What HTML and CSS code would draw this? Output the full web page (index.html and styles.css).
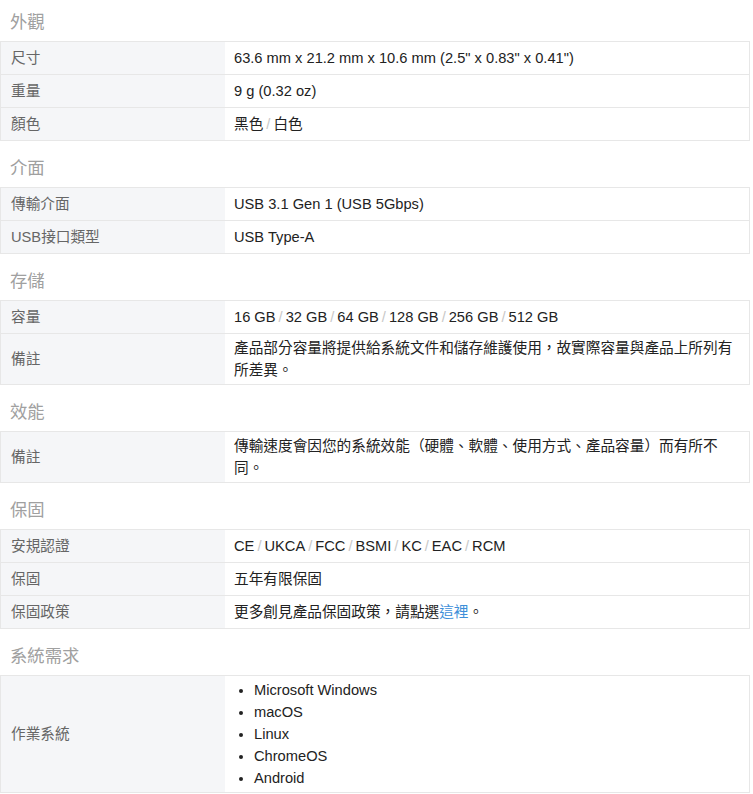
FILE: index.html
```html
<!DOCTYPE html>
<html lang="zh-Hant">
<head>
  <meta charset="UTF-8" />
  <meta name="viewport" content="width=device-width, initial-scale=1.0" />
  <title>產品規格</title>
  <link rel="stylesheet" href="styles.css">
</head>
<body>

  <div class="specs">

    <!-- 外觀 -->
    <h3 class="spec-title">外觀</h3>
    <div class="spec-table">
      <div class="spec-row">
        <div class="spec-label">尺寸</div>
        <div class="spec-value"><p>63.6 mm x 21.2 mm x 10.6 mm (2.5" x 0.83" x 0.41")</p></div>
      </div>
      <div class="spec-row">
        <div class="spec-label">重量</div>
        <div class="spec-value"><p>9 g (0.32 oz)</p></div>
      </div>
      <div class="spec-row">
        <div class="spec-label">顏色</div>
        <div class="spec-value"><p>黑色<span class="sep">/</span>白色</p></div>
      </div>
    </div>

    <!-- 介面 -->
    <h3 class="spec-title">介面</h3>
    <div class="spec-table">
      <div class="spec-row">
        <div class="spec-label">傳輸介面</div>
        <div class="spec-value"><p>USB 3.1 Gen 1 (USB 5Gbps)</p></div>
      </div>
      <div class="spec-row">
        <div class="spec-label">USB接口類型</div>
        <div class="spec-value"><p>USB Type-A</p></div>
      </div>
    </div>

    <!-- 存儲 -->
    <h3 class="spec-title">存儲</h3>
    <div class="spec-table">
      <div class="spec-row">
        <div class="spec-label">容量</div>
        <div class="spec-value"><p>16 GB<span class="sep">/</span>32 GB<span class="sep">/</span>64 GB<span class="sep">/</span>128 GB<span class="sep">/</span>256 GB<span class="sep">/</span>512 GB</p></div>
      </div>
      <div class="spec-row">
        <div class="spec-label">備註</div>
        <div class="spec-value"><p>產品部分容量將提供給系統文件和儲存維護使用，故實際容量與產品上所列有所差異。</p></div>
      </div>
    </div>

    <!-- 效能 -->
    <h3 class="spec-title">效能</h3>
    <div class="spec-table">
      <div class="spec-row">
        <div class="spec-label">備註</div>
        <div class="spec-value"><p>傳輸速度會因您的系統效能（硬體、軟體、使用方式、產品容量）而有所不同。</p></div>
      </div>
    </div>

    <!-- 保固 -->
    <h3 class="spec-title">保固</h3>
    <div class="spec-table">
      <div class="spec-row">
        <div class="spec-label">安規認證</div>
        <div class="spec-value"><p>CE<span class="sep">/</span>UKCA<span class="sep">/</span>FCC<span class="sep">/</span>BSMI<span class="sep">/</span>KC<span class="sep">/</span>EAC<span class="sep">/</span>RCM</p></div>
      </div>
      <div class="spec-row">
        <div class="spec-label">保固</div>
        <div class="spec-value"><p>五年有限保固</p></div>
      </div>
      <div class="spec-row">
        <div class="spec-label">保固政策</div>
        <div class="spec-value"><p>更多創見產品保固政策，請點選<a href="#">這裡</a>。</p></div>
      </div>
    </div>

    <!-- 系統需求 -->
    <h3 class="spec-title">系統需求</h3>
    <div class="spec-table">
      <div class="spec-row">
        <div class="spec-label">作業系統</div>
        <div class="spec-value">
          <ul class="os-list">
            <li>Microsoft Windows</li>
            <li>macOS</li>
            <li>Linux</li>
            <li>ChromeOS</li>
            <li>Android</li>
          </ul>
        </div>
      </div>
    </div>

  </div>

</body>
</html>
```

FILE: styles.css
```css
/* VARIABLES */
:root {
  --color-text: #222;
  --color-label: #666;
  --color-title: #a0a0a0;
  --color-border: #e7e7e7;
  --color-label-bg: #f5f6f8;
  --color-link: #3d8fd9;
  --font-body: 'Liberation Sans', Arial, 'Noto Sans CJK TC', sans-serif;
}

/* RESET */
*, *::before, *::after { box-sizing: border-box; margin: 0; padding: 0; }
body {
  font-family: var(--font-body);
  font-size: 11pt;
  line-height: 22px;
  color: var(--color-text);
  background: #fff;
}
a { text-decoration: none; color: var(--color-link); }

/* SPEC BLOCKS */
.specs {
  width: 750px;
}
.spec-title {
  font-size: 13pt;
  font-weight: 400;
  line-height: 26px;
  color: var(--color-title);
  padding: 9px 10px 6px;
}
.spec-table {
  border: 1px solid var(--color-border);
  border-bottom: none;
  margin-bottom: 5px;
}
.spec-row {
  display: grid;
  grid-template-columns: 224px 1fr;
  border-bottom: 1px solid var(--color-border);
}
.spec-label,
.spec-value {
  display: flex;
  flex-direction: column;
  justify-content: center;
  min-height: 32px;
  padding: 3px 10px;
}
.spec-label {
  background: var(--color-label-bg);
  color: var(--color-label);
}
.spec-value {
  padding-left: 9px;
}
.sep {
  color: #c8c8c8;
  margin: 0 3px;
}

/* OS LIST */
.os-list {
  padding-left: 20px;
}
```
